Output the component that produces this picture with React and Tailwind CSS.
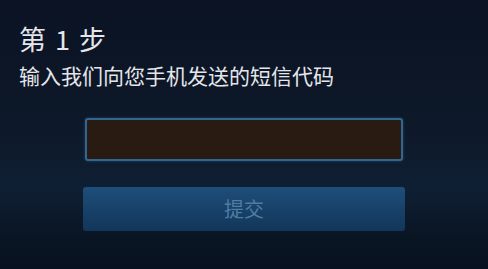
export default function App() {
  return (
    <div
      className="w-[488px] h-[269px] overflow-hidden bg-[linear-gradient(to_bottom,#0b1324_0%,#0d1829_45%,#0f1f33_70%,#0a1524_88%,#081120_100%)] flex flex-col"
      style={{ fontFamily: '"Noto Sans CJK SC", "Noto Sans", sans-serif' }}
    >
      <div className="pl-[19px] pt-[22px] text-[#e4e6ea]">
        <div className="text-[27px] leading-[34px] flex items-center gap-[9px]">
          <span>第</span>
          <span>1</span>
          <span>步</span>
        </div>
        <div className="text-[21px] leading-[28px] mt-[5px]">
          输入我们向您手机发送的短信代码
        </div>
      </div>
      <div className="flex flex-col items-center mt-[29px]">
        <div className="w-[318px] h-[43px] rounded-[3px] border-2 border-[#2f6790] bg-[#2a1b12] shadow-[0_0_3px_rgba(60,130,180,0.4)]" />
        <div className="mt-[26px] w-[322px] h-[44px] rounded-[3px] bg-[linear-gradient(to_bottom,#1e4e7a,#173f66_60%,#12365a)] flex items-center justify-center text-[20px] text-[#4f7da2]">
          提交
        </div>
      </div>
    </div>
  );
}
